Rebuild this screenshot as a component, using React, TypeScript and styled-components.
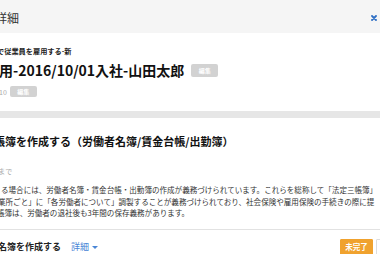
import React from 'react'
import styled, { createGlobalStyle } from 'styled-components';

const GlobalStyle = createGlobalStyle`
    html, body {
        margin: 0;
        padding: 0;
        background: #fff;
    }
    body {
        font-family: "Noto Sans CJK JP", "Noto Sans", sans-serif;
        color: #333;
    }
`;

const Page = styled.div`
    width: 380px;
    height: 254px;
    overflow: hidden;
    display: flex;
    flex-direction: column;
`;

const Header = styled.div`
    height: 33px;
    flex-shrink: 0;
    background: #f5f5f5;
    display: flex;
    align-items: center;
    justify-content: space-between;
    padding-right: 3px;
`;

const HeaderTitle = styled.span<{ $cut: number }>`
    margin-left: -${p => p.$cut}px;
    font-size: 12px;
    line-height: 14px;
    color: #333;
    padding-top: 2px;
`;

const CloseButton = styled.button`
    border: none;
    background: none;
    padding: 0;
    width: 6px;
    height: 6px;
    display: flex;
    cursor: pointer;
    margin-top: 2px;
`;

const Small = styled.div<{ $cut: number; $gray?: boolean; $top: number }>`
    margin-left: -${p => p.$cut}px;
    margin-top: ${p => p.$top}px;
    font-size: 7.2px;
    line-height: 10px;
    font-weight: ${p => (p.$gray ? 400 : 700)};
    color: ${p => (p.$gray ? '#aaa' : '#222')};
    white-space: nowrap;
`;

const TitleRow = styled.div`
    display: flex;
    align-items: center;
    gap: 7px;
    height: 16px;
    margin-top: 6px;
`;

const Title = styled.h1<{ $cut: number }>`
    margin: 0 0 0 -${p => p.$cut}px;
    font-size: 14px;
    line-height: 16px;
    font-weight: 700;
    color: #111;
    white-space: nowrap;
`;

const MetaRow = styled.div`
    display: flex;
    align-items: center;
    gap: 3px;
    height: 12px;
    margin-top: 8px;
`;

const MetaText = styled.span<{ $cut: number }>`
    margin-left: -${p => p.$cut}px;
    font-size: 7px;
    color: #aaa;
`;

const EditButton = styled.button<{ $h: number }>`
    width: 27px;
    height: ${p => p.$h}px;
    border: none;
    border-radius: 2px;
    background: #d2d2d2;
    color: #fff;
    font-family: inherit;
    font-size: 6px;
    font-weight: 700;
    padding: 0;
    display: flex;
    align-items: center;
    justify-content: center;
`;

const GrayBar = styled.div`
    height: 7px;
    background: #e6e6e6;
    margin-top: 14px;
    flex-shrink: 0;
`;

const Heading = styled.h2<{ $cut: number }>`
    margin: 16px 0 0 -${p => p.$cut}px;
    font-size: 11px;
    line-height: 14px;
    font-weight: 700;
    color: #111;
    white-space: nowrap;
`;

const Paragraph = styled.div`
    margin-top: 8px;
    display: flex;
    flex-direction: column;
`;

const Line = styled.span<{ $cut: number }>`
    margin-left: ${p => -p.$cut}px;
    font-size: 7.55px;
    line-height: 11.5px;
    color: #333;
    white-space: nowrap;
`;

const Divider = styled.div`
    height: 1px;
    background: #e2e2e2;
    margin-top: 10px;
    flex-shrink: 0;
`;

const TaskRow = styled.div`
    display: flex;
    align-items: center;
    margin-top: 9px;
    height: 16px;
`;

const TaskName = styled.span<{ $cut: number }>`
    margin-left: -${p => p.$cut}px;
    font-size: 9px;
    font-weight: 700;
    color: #222;
    white-space: nowrap;
`;

const DetailLink = styled.a`
    margin-left: 10px;
    font-size: 9px;
    color: #4a86d6;
    display: flex;
    align-items: center;
    gap: 3px;
    cursor: pointer;
`;

const Caret = styled.span`
    width: 0;
    height: 0;
    border-left: 3px solid transparent;
    border-right: 3px solid transparent;
    border-top: 3px solid #4a86d6;
    margin-top: 1px;
`;

const Actions = styled.div`
    margin-left: auto;
    margin-right: -28px;
    display: flex;
    gap: 3px;
    height: 16px;
`;

const StatusButton = styled.button<{ $active?: boolean }>`
    width: ${p => (p.$active ? 33 : 32)}px;
    height: 16px;
    border: 1px solid ${p => (p.$active ? '#f0a22e' : '#ddd')};
    background: ${p => (p.$active ? '#f0a22e' : '#fff')};
    color: ${p => (p.$active ? '#fff' : '#999')};
    font-family: inherit;
    font-size: 7.5px;
    font-weight: 700;
    padding: 0;
    border-radius: 1px;
`;

const App = () => {
    return (
        <Page>
            <GlobalStyle />
            <Header>
                <HeaderTitle $cut={5}>詳細</HeaderTitle>
                <CloseButton aria-label="閉じる">
                    <svg width="6" height="6" viewBox="0 0 6 6">
                        <path d="M1 1 L5 5 M5 1 L1 5" stroke="#2f6fc4" strokeWidth="1.8" strokeLinecap="round" />
                    </svg>
                </CloseButton>
            </Header>

            <Small $cut={3} $top={13}>で従業員を雇用する-新</Small>
            <TitleRow>
                <Title $cut={1}>用-2016/10/01入社-山田太郎</Title>
                <EditButton $h={13}>編集</EditButton>
            </TitleRow>
            <MetaRow>
                <MetaText $cut={1}>10</MetaText>
                <EditButton $h={11}>編集</EditButton>
            </MetaRow>

            <GrayBar />

            <Heading $cut={6}>帳簿を作成する（労働者名簿/賃金台帳/出勤簿）</Heading>
            <Small $cut={2} $gray $top={18}>まで</Small>
            <Paragraph>
                <Line $cut={-1}>る場合には、労働者名簿・賃金台帳・出勤簿の作成が義務づけられています。これらを総称して「法定三帳簿」</Line>
                <Line $cut={2}>業所ごと」に「各労働者について」調製することが義務づけられており、社会保険や雇用保険の手続きの際に提</Line>
                <Line $cut={3}>帳簿は、労働者の退社後も3年間の保存義務があります。</Line>
            </Paragraph>

            <Divider />

            <TaskRow>
                <TaskName $cut={2}>名簿を作成する</TaskName>
                <DetailLink>詳細<Caret /></DetailLink>
                <Actions>
                    <StatusButton $active>未完了</StatusButton>
                    <StatusButton>完了</StatusButton>
                </Actions>
            </TaskRow>
        </Page>
    )
}

export default App
